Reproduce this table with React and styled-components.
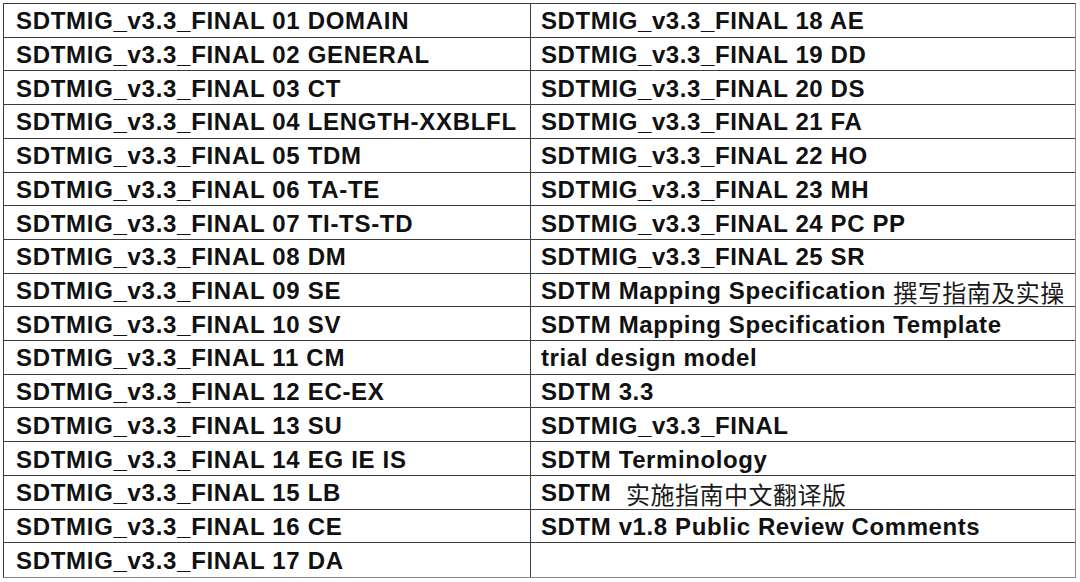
import styled, {createGlobalStyle} from "styled-components";

const GlobalStyle = createGlobalStyle`
   html, body {
      margin: 0;
      padding: 0;
      background: #ffffff;
   }
`;

const Page = styled.div`
   width: 1080px;
   height: 582px;
   padding: 3px 4px 4px 3px;
   box-sizing: border-box;
   background: #ffffff;
`;

const Table = styled.div`
   display: grid;
   grid-template-columns: 527px 1fr;
   grid-template-rows: repeat(17, 1fr);
   height: 100%;
   box-sizing: border-box;
   border-top: 1px solid #3c3c3c;
   border-left: 1px solid #3c3c3c;
   border-right: 1px solid #8a8a8a;
   border-bottom: 1px solid #8a8a8a;
`;

const Cell = styled.div`
   display: flex;
   align-items: center;
   padding-left: ${(props) => (props.right ? "10px" : "12px")};
   padding-top: 2px;
   box-sizing: border-box;
   border-bottom: ${(props) => (props.last ? "none" : "1px solid #3c3c3c")};
   border-right: ${(props) => (props.right ? "none" : "1px solid #3c3c3c")};
   font-family: "Liberation Sans", Arial, "Noto Sans CJK SC", sans-serif;
   font-weight: bold;
   font-size: 24px;
   letter-spacing: ${(props) => (props.right ? "0.6px" : "0.7px")};
   color: #111111;
   white-space: pre;
   overflow: hidden;
`;

const Cjk = styled.span`
   font-family: "Noto Sans CJK SC", sans-serif;
   font-weight: normal;
   font-size: 24px;
   letter-spacing: 0.5px;
   color: #1a1a1a;
`;

const left = [
    "01 DOMAIN", "02 GENERAL", "03 CT", "04 LENGTH-XXBLFL", "05 TDM", "06 TA-TE",
    "07 TI-TS-TD", "08 DM", "09 SE", "10 SV", "11 CM", "12 EC-EX", "13 SU",
    "14 EG IE IS", "15 LB", "16 CE", "17 DA",
].map((s) => "SDTMIG_v3.3_FINAL " + s);

const right = [
    {t: "SDTMIG_v3.3_FINAL 18 AE"},
    {t: "SDTMIG_v3.3_FINAL 19 DD"},
    {t: "SDTMIG_v3.3_FINAL 20 DS"},
    {t: "SDTMIG_v3.3_FINAL 21 FA"},
    {t: "SDTMIG_v3.3_FINAL 22 HO"},
    {t: "SDTMIG_v3.3_FINAL 23 MH"},
    {t: "SDTMIG_v3.3_FINAL 24 PC PP"},
    {t: "SDTMIG_v3.3_FINAL 25 SR"},
    {t: "SDTM Mapping Specification ", cjk: "撰写指南及实操"},
    {t: "SDTM Mapping Specification Template"},
    {t: "trial design model"},
    {t: "SDTM 3.3"},
    {t: "SDTMIG_v3.3_FINAL"},
    {t: "SDTM Terminology"},
    {t: "SDTM  ", cjk: "实施指南中文翻译版"},
    {t: "SDTM v1.8 Public Review Comments"},
    {t: ""},
];

const App = () => {
    return (
        <Page>
            <GlobalStyle />
            <Table>
                {left.map((text, i) => {
                    const last = i === left.length - 1;
                    return [
                        <Cell key={"l" + i} last={last}>{text}</Cell>,
                        <Cell key={"r" + i} right last={last}>
                            {right[i].t}
                            {right[i].cjk && <Cjk>{right[i].cjk}</Cjk>}
                        </Cell>,
                    ];
                })}
            </Table>
        </Page>
    );
};

export default App;
